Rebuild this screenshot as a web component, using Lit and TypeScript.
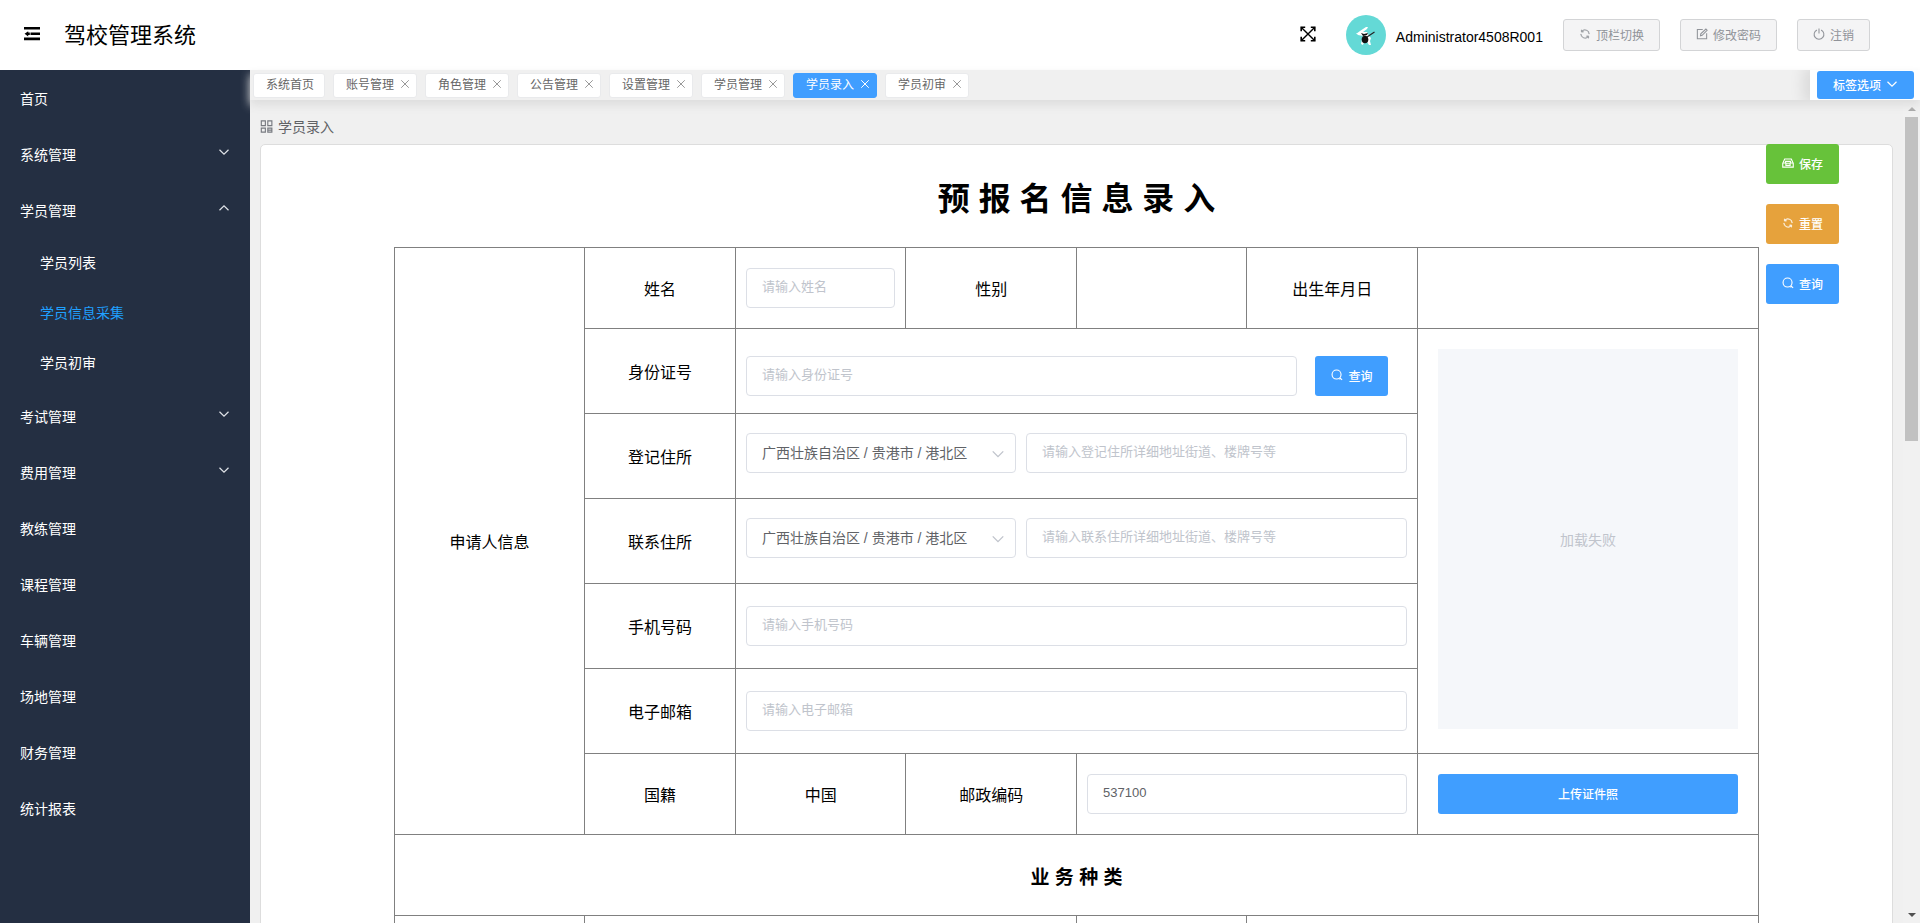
import { LitElement, html, css, svg, nothing } from "lit";
import { customElement, property, state } from "lit/decorators.js";
import { classMap } from "lit/directives/class-map.js";

const glyphs: Record<string, unknown> = {
  fold: svg`<path fill="currentColor" d="M0 1h16v2.600H0zM6.500 6.600H16v2.400H6.500zM0 11.600h16v2.600H0zM.6 7.800l3.600-2.600v1.400h1.600v2.400H4.200v1.400z"/>`,
  fullscreen: svg`<g fill="none" stroke="currentColor" stroke-width="1.6"><path d="M1.200 5.200v-4h4M10.800 1.200h4v4M14.800 10.800v4h-4M5.200 14.800h-4v-4"/><path stroke-width="1.400" d="M1.200 1.200 14.800 14.800M14.800 1.200 1.200 14.800"/></g>`,
  down: svg`<path fill="none" stroke="currentColor" stroke-width="1.600" d="M2 5l6 6 6-6"/>`,
  up: svg`<path fill="none" stroke="currentColor" stroke-width="1.600" d="M2 11l6-6 6 6"/>`,
  close: svg`<path fill="none" stroke="currentColor" stroke-width="1.600" d="M2 2l12 12M14 2L2 14"/>`,
  search: svg`<g fill="none" stroke="currentColor" stroke-width="1.500"><circle cx="7.400" cy="7.400" r="6"/><path d="M11 13.400h1.400M12 11.800l2.800 2.800"/></g>`,
  refresh: svg`<path fill="currentColor" stroke="currentColor" stroke-width="20" transform="scale(.015625)" d="M771.776 794.880A384 384 0 0 1 128 512h64a320 320 0 0 0 555.712 216.448H654.720a32 32 0 1 1 0-64h149.056a32 32 0 0 1 32 32v148.928a32 32 0 1 1-64 0v-50.560zM276.288 295.616h92.992a32 32 0 0 1 0 64H220.160a32 32 0 0 1-32-32V178.560a32 32 0 0 1 64 0v50.560A384 384 0 0 1 896.128 512h-64a320 320 0 0 0-555.776-216.384z"/>`,
  edit: svg`<g fill="none" stroke="currentColor" stroke-width="1.400"><path d="M9 2H1.800v12.400h12.400V7"/><path d="M6 10.400l.4-2.600 6.800-6.400 1.600 1.600-6.600 6.800z"/></g>`,
  power: svg`<g fill="none" stroke="currentColor" stroke-width="1.400"><path d="M5.200 2.600a6.500 6.500 0 1 0 5.600 0"/><path d="M8 .6v6.800"/></g>`,
  box: svg`<g fill="none" stroke="currentColor" stroke-width="1.500"><path d="M1 13.500V8.500L3.600 2.600h8.800L15 8.500v5z"/><path d="M1.200 8h3.600V5.800h6.400V8h3.600M5.200 8.400h5.600v2.800H5.200z"/></g>`,
  blocks: svg`<g fill="none" stroke="currentColor" stroke-width="1.400"><path d="M1.600 1h5v6h-5zM9.600 1h5v6h-5zM1.600 10h5v5h-5zM9.600 10h5v5h-5zM9.600 12.500h5"/></g>`,
};

@customElement("ui-icon")
class UiIcon extends LitElement {
  static styles = css`
    :host { display: inline-flex; width: 1em; height: 1em; flex: none; }
    .glyph { display: block; width: 100%; height: 100%; }
  `;
  @property() name = "";
  render() {
    return html`<svg class="glyph" viewBox="0 0 16 16" aria-hidden="true">${glyphs[this.name]}</svg>`;
  }
}

interface MenuEntry {
  title: string;
  open?: boolean;
  group?: boolean;
  children?: string[];
}

const menu: MenuEntry[] = [
  { title: "首页" },
  { title: "系统管理", group: true },
  { title: "学员管理", group: true, open: true, children: ["学员列表", "学员信息采集", "学员初审"] },
  { title: "考试管理", group: true },
  { title: "费用管理", group: true },
  { title: "教练管理" },
  { title: "课程管理" },
  { title: "车辆管理" },
  { title: "场地管理" },
  { title: "财务管理" },
  { title: "统计报表" },
];

const region = "广西壮族自治区 / 贵港市 / 港北区";

@customElement("app-root")
class AppRoot extends LitElement {
  static styles = css`
    :host {
      display: flex;
      flex-direction: column;
      height: 100vh;
      overflow: hidden;
      color: #000;
      background: #f0f0f0;
      font-family: "Liberation Sans", "Noto Sans CJK SC", sans-serif;
      font-size: 14px;
    }
    * { box-sizing: border-box; }
    button, input, select { font-family: inherit; margin: 0; }
    button { cursor: pointer; }
    a { color: inherit; text-decoration: none; }

    .header {
      flex: none;
      display: flex;
      align-items: center;
      height: 70px;
      padding: 0 50px 0 24px;
      background: #fff;
    }
    .plain { display: flex; padding: 0 0 2px; border: 0; background: none; color: #000; font-size: 16px; }
    .brand { margin: 0 auto 0 24px; padding-bottom: 4px; font-size: 22px; font-weight: 400; }
    .avatar { width: 40px; height: 40px; margin: 0 10px 0 30px; border-radius: 50%; }
    .user { margin-right: 20px; padding-top: 4px; }
    .tools { display: flex; gap: 20px; }

    .btn {
      display: inline-flex;
      align-items: center;
      justify-content: center;
      gap: 5px;
      height: 40px;
      padding: 0 15px 2px;
      border: 0;
      border-radius: 3px;
      color: #fff;
      background: #409eff;
      font-size: 12px;
      font-weight: 500;
      white-space: nowrap;
      min-width: 73px;
    }
    .btn.info { height: 32px; border: 1px solid #d3d4d6; color: #909399; background: #f4f4f5; font-weight: 400; }
    .btn.success { background: #67c23a; }
    .btn.warning { background: #e6a23c; }
    .btn.small { height: 28px; padding: 0 16px 2px; }
    .btn.block { width: 100%; }

    .body { flex: 1; display: flex; min-height: 0; }
    .sidebar { flex: none; width: 250px; overflow: hidden; color: #fff; background: #242f42; }
    .list { margin: 0; padding: 0; list-style: none; }
    .item {
      display: flex;
      align-items: center;
      justify-content: space-between;
      height: 56px;
      padding: 0 20px;
    }
    .item ui-icon { padding-bottom: 4px; width: 12px; height: 16px; color: #e0e3e8; }
    .item.sub { height: 50px; padding: 0 20px 2px 40px; }
    .item.current { color: #20a0ff; }

    .workspace { flex: 1; display: flex; flex-direction: column; min-width: 0; }
    .tabs {
      position: relative;
      z-index: 1;
      flex: none;
      display: flex;
      align-items: center;
      height: 30px;
      padding-left: 3px;
      overflow: hidden;
      background: #f0f0f0;
      box-shadow: 0 5px 10px #ddd;
    }
    .strip { flex: 1; display: flex; gap: 8px; }
    .tab {
      display: flex;
      align-items: center;
      height: 25px;
      padding: 0 10px 3px 12px;
      border: 1px solid #e9eaec;
      border-radius: 3px;
      color: #666;
      background: #fff;
      font-size: 12px;
      white-space: nowrap;
    }
    .tab.closable { padding-right: 5px; }
    .tab.active { color: #fff; border-color: #409eff; background: #409eff; }
    .close { margin-left: 5px; padding: 1px; border: 0; background: none; color: #999; font-size: 10px; display: flex; }
    .active .close { color: #fff; }
    .options {
      display: flex;
      align-items: center;
      height: 30px;
      padding: 0 6px 0 7px;
      background: #fff;
      box-shadow: -3px 0 15px 3px rgba(0, 0, 0, 0.1);
    }

    .scroll { flex: 1; display: flex; min-height: 0; }
    .page { flex: 1; min-width: 0; padding: 15px 10px 0; overflow: hidden; }
    .crumb { display: flex; align-items: center; gap: 5px; height: 22px; margin-bottom: 7px; color: #606266; }
    .crumb ui-icon { font-size: 13px; color: #777a80; }
    .card {
      display: grid;
      grid-template-columns: 133px minmax(0, 1fr) 133px;
      min-height: 1200px;
      border: 1px solid #ddd;
      border-radius: 5px;
      background: #fff;
    }
    .form { grid-column: 2; }
    .heading { margin: 33px 0 27px; font-size: 32px; line-height: 42px; text-align: center; }
    .actions { display: flex; flex-direction: column; align-items: flex-start; gap: 20px; margin: -1px 0 0 7px; }

    .grid { width: 100%; table-layout: fixed; border-collapse: collapse; font-size: 16px; }
    .c1 { width: 13.930%; }
    .c2 { width: 11.070%; }
    .c3 { width: 12.500%; }
    .c4 { width: 25%; }
    .grid td, .grid th {
      height: 85px;
      padding: 0 10px;
      border: 1px solid #808080;
      font-weight: 400;
      text-align: center;
    }
    .grid .low td, .grid .low th { height: 81px; }
    .grid td.raised { padding-bottom: 6px; }
    .grid td.lowered { padding-top: 10px; }
    .grid td.photo { padding: 20px; }
    .section { margin: 0; font-size: 19px; }
    .thumb {
      display: flex;
      align-items: center;
      justify-content: center;
      height: 380px;
      margin-bottom: 4px;
      color: #c0c4cc;
      background: #f5f7fa;
      font-size: 14px;
    }

    .field {
      display: block;
      width: 100%;
      height: 40px;
      padding: 0 15px 3px;
      border: 1px solid #dcdfe6;
      border-radius: 4px;
      outline: none;
      color: #606266;
      background: #fff;
      font-size: 13px;
    }
    .field::placeholder { color: #c0c4cc; opacity: 1; }
    .search { display: grid; grid-template-columns: 5fr 1fr; justify-items: center; }
    .address { display: flex; gap: 10px; }
    .picker { flex: none; display: grid; align-items: center; width: 270px; }
    .picker .field { grid-area: 1 / 1; appearance: none; padding-bottom: 0; font-size: 14px; }
    .picker ui-icon { grid-area: 1 / 1; justify-self: end; margin: 2px 11px 0 0; color: #c0c4cc; font-size: 14px; pointer-events: none; }

    .rail {
      flex: none;
      display: flex;
      flex-direction: column;
      align-items: center;
      width: 17px;
      padding: 6px 0 6px;
      background: #f1f1f1;
    }
    .arrow { width: 0; height: 0; border: 4px solid transparent; }
    .arrow.top { border-top: 0; border-bottom-color: #a3a3a3; margin: 1px 0 6px; }
    .arrow.bottom { border-bottom: 0; border-top-color: #505050; margin-top: auto; }
    .thumbbar { width: 13px; height: 40%; background: #c1c1c1; }
  `;

  @state() private tabs = ["系统首页", "账号管理", "角色管理", "公告管理", "设置管理", "学员管理", "学员录入", "学员初审"];
  @state() private activeTab = "学员录入";
  @state() private currentMenu = "学员信息采集";

  private closeTab(name: string) {
    this.tabs = this.tabs.filter((t) => t !== name);
  }

  private renderMenu() {
    return html`<nav class="sidebar">
      <ul class="list">
        ${menu.map(
          (m) => html`<li>
            <a class="item" href="#">${m.title}${m.group ? html`<ui-icon name=${m.open ? "up" : "down"}></ui-icon>` : nothing}</a>
            ${m.children
              ? html`<ul class="list">
                  ${m.children.map(
                    (c) => html`<li><a class=${classMap({ item: true, sub: true, current: c === this.currentMenu })} href="#">${c}</a></li>`
                  )}
                </ul>`
              : nothing}
          </li>`
        )}
      </ul>
    </nav>`;
  }

  private renderTabs() {
    return html`<div class="tabs">
      <div class="strip">
        ${this.tabs.map(
          (t, i) => html`<div class=${classMap({ tab: true, closable: i > 0, active: t === this.activeTab })}>
            <a href="#">${t}</a>${i > 0
              ? html`<button class="close" aria-label="关闭" @click=${() => this.closeTab(t)}><ui-icon name="close"></ui-icon></button>`
              : nothing}
          </div>`
        )}
      </div>
      <div class="options"><button class="btn small">标签选项<ui-icon name="down"></ui-icon></button></div>
    </div>`;
  }

  private renderAddress(id: string, label: string) {
    return html`<tr>
      <th><label for=${id}>${label}</label></th>
      <td class="raised" colspan="4">
        <div class="address">
          <div class="picker">
            <select class="field" aria-label=${label}><option>${region}</option></select>
            <ui-icon name="down"></ui-icon>
          </div>
          <input class="field" id=${id} placeholder=${`请输入${label}详细地址街道、楼牌号等`} />
        </div>
      </td>
    </tr>`;
  }

  private renderInput(id: string, label: string) {
    return html`<tr>
      <th><label for=${id}>${label}</label></th>
      <td colspan="4"><input class="field" id=${id} placeholder=${`请输入${label}`} /></td>
    </tr>`;
  }

  private renderForm() {
    return html`<table class="grid">
      <colgroup>
        <col class="c1" /><col class="c2" /><col class="c3" /><col class="c3" /><col class="c3" /><col class="c3" /><col class="c4" />
      </colgroup>
      <tbody>
        <tr class="low">
          <th rowspan="7">申请人信息</th>
          <th><label for="name">姓名</label></th>
          <td><input class="field" id="name" placeholder="请输入姓名" /></td>
          <th>性别</th>
          <td></td>
          <th>出生年月日</th>
          <td></td>
        </tr>
        <tr>
          <th><label for="idcard">身份证号</label></th>
          <td class="lowered" colspan="4">
            <div class="search">
              <input class="field" id="idcard" placeholder="请输入身份证号" />
              <button class="btn"><ui-icon name="search"></ui-icon>查询</button>
            </div>
          </td>
          <td class="photo" rowspan="5"><div class="thumb">加载失败</div></td>
        </tr>
        ${this.renderAddress("registered", "登记住所")}
        ${this.renderAddress("contact", "联系住所")}
        ${this.renderInput("mobile", "手机号码")}
        ${this.renderInput("email", "电子邮箱")}
        <tr class="low">
          <th>国籍</th>
          <td>中国</td>
          <th><label for="zip">邮政编码</label></th>
          <td colspan="2"><input class="field" id="zip" .value=${"537100"} /></td>
          <td class="photo"><button class="btn block">上传证件照</button></td>
        </tr>
        <tr class="low"><td colspan="7"><h3 class="section">业 务 种 类</h3></td></tr>
        <tr>
          <td></td>
          <td colspan="3"></td>
          <td></td>
          <td colspan="2"></td>
        </tr>
      </tbody>
    </table>`;
  }

  render() {
    return html`
      <header class="header">
        <button class="plain" aria-label="折叠菜单"><ui-icon name="fold"></ui-icon></button>
        <div class="brand">驾校管理系统</div>
        <button class="plain" aria-label="全屏"><ui-icon name="fullscreen"></ui-icon></button>
        <svg class="avatar" viewBox="0 0 40 40" aria-hidden="true">
          <rect width="40" height="40" fill="#64d9d6" />
          <path fill="#fff" d="M10 19l4-3 6-4 2 0-1 2-4 3 4 0 2 4 2 2-1 3 1 4-2 0-2-3-3 0-1 3-2-1 1-5 1-3-5-1-2-2z" />
          <path fill="#111" d="M15 18l3 1 4-1-1 2-4 1z" />
          <ellipse cx="19" cy="24.500" rx="3.300" ry="3.800" fill="#111" />
          <path d="M21 22l7.500-5" stroke="#222" stroke-width="1.200" />
        </svg>
        <span class="user">Administrator4508R001</span>
        <div class="tools">
          <button class="btn info"><ui-icon name="refresh"></ui-icon>顶栏切换</button>
          <button class="btn info"><ui-icon name="edit"></ui-icon>修改密码</button>
          <button class="btn info"><ui-icon name="power"></ui-icon>注销</button>
        </div>
      </header>
      <div class="body">
        ${this.renderMenu()}
        <div class="workspace">
          ${this.renderTabs()}
          <div class="scroll">
            <main class="page">
              <div class="crumb"><ui-icon name="blocks"></ui-icon>学员录入</div>
              <section class="card">
                <div class="form">
                  <h1 class="heading">预 报 名 信 息 录 入</h1>
                  ${this.renderForm()}
                </div>
                <div class="actions">
                  <button class="btn success"><ui-icon name="box"></ui-icon>保存</button>
                  <button class="btn warning"><ui-icon name="refresh"></ui-icon>重置</button>
                  <button class="btn"><ui-icon name="search"></ui-icon>查询</button>
                </div>
              </section>
            </main>
            <div class="rail" aria-hidden="true">
              <span class="arrow top"></span>
              <span class="thumbbar"></span>
              <span class="arrow bottom"></span>
            </div>
          </div>
        </div>
      </div>
    `;
  }
}
